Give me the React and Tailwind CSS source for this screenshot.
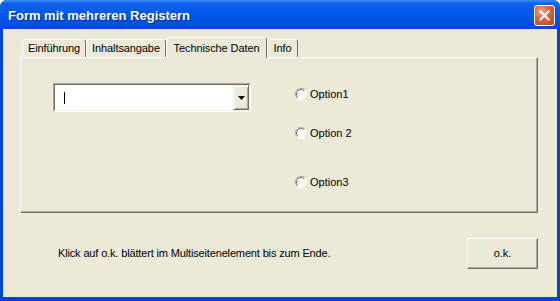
import React from 'react';

const TABS = [
  { label: 'Einführung', cls: 'w-[64px]' },
  { label: 'Inhaltsangabe', cls: 'w-[80px]' },
  { label: 'Technische Daten', cls: 'w-[101px]', active: true },
  { label: 'Info', cls: 'w-[31px]' },
];

const Radio = ({ label }) => (
  <div className="flex items-center h-[16px]">
    <svg width="12" height="12" viewBox="0 0 12 12" className="shrink-0">
      <circle cx="6" cy="6" r="5.5" fill="#fff" />
      <path d="M2.1 9.9 A5.5 5.5 0 0 1 9.9 2.1" stroke="#ACA899" strokeWidth="1" fill="none" />
      <path d="M9.9 2.1 A5.5 5.5 0 0 1 2.1 9.9" stroke="#ffffff" strokeWidth="1" fill="none" />
      <path d="M2.8 9.2 A4.5 4.5 0 0 1 9.2 2.8" stroke="#716F64" strokeWidth="1" fill="none" />
      <path d="M9.2 2.8 A4.5 4.5 0 0 1 2.8 9.2" stroke="#F1EFE2" strokeWidth="1" fill="none" />
    </svg>
    <span className="ml-[3px] text-[11px] text-black leading-none">{label}</span>
  </div>
);

const CloseButton = () => (
  <div className="w-[21px] h-[21px] rounded-[3px] border border-white bg-[radial-gradient(circle_at_35%_30%,#F0A08A_0%,#E0613D_45%,#C2401C_100%)] flex items-center justify-center">
    <svg width="13" height="13" viewBox="0 0 13 13">
      <path d="M2.5 2.5 L10.5 10.5 M10.5 2.5 L2.5 10.5" stroke="#fff" strokeWidth="2.2" strokeLinecap="square" />
    </svg>
  </div>
);

export default function App() {
  return (
    <div className="w-[560px] h-[301px] flex flex-col bg-[#0842D2] rounded-t-[7px] overflow-hidden font-['Liberation_Sans',Arial,sans-serif]">
      {/* title bar */}
      <div className="h-[29px] shrink-0 flex items-center justify-between pl-[8px] pr-[5px] pt-[2px] bg-[linear-gradient(to_bottom,#3C8CF9_0%,#0F63EC_12%,#0058E8_45%,#0052E0_80%,#0046D3_100%)]">
        <span className="text-white font-bold text-[13px] [text-shadow:1px_1px_#0B2D8E]">Form mit mehreren Registern</span>
        <CloseButton />
      </div>

      {/* body */}
      <div className="flex-1 ml-[3px] mr-[3px] mb-[4px] bg-[#ECE9D8] flex flex-col pl-[17px] pr-[19px] pt-[8px]">
        {/* tab row */}
        <div className="h-[20px] flex items-end pl-[2px] tracking-[-0.1px]">
          {TABS.map((t) =>
            t.active ? (
              <div
                key={t.label}
                className={`${t.cls} relative z-10 h-[21px] -mb-[1px] bg-[#ECE9D8] border-l border-t border-r border-l-white border-t-white border-r-[#716F64] rounded-t-[3px] flex items-start justify-center pt-[2px] text-[11px] text-black`}
              >
                {t.label}
              </div>
            ) : (
              <div
                key={t.label}
                className={`${t.cls} h-[18px] bg-[#ECE9D8] border-l border-t border-r border-l-white border-t-white border-r-[#716F64] rounded-t-[3px] flex items-center justify-center text-[11px] text-black`}
              >
                {t.label}
              </div>
            )
          )}
        </div>

        {/* page */}
        <div className="h-[156px] shrink-0 border border-t-white border-l-white border-r-[#716F64] border-b-[#716F64] shadow-[inset_-1px_-1px_#ACA899] flex">
          <div className="pl-[32px] pt-[25px]">
            <div className="w-[198px] h-[29px] border border-t-[#ACA899] border-l-[#ACA899] border-r-white border-b-white">
              <div className="w-full h-full border border-t-[#716F64] border-l-[#716F64] border-r-[#F1EFE2] border-b-[#F1EFE2] bg-white flex items-center justify-between">
                <div className="ml-[9px] w-px h-[12px] bg-black" />
                <div className="w-[16px] h-full border border-t-[#F1EFE2] border-l-[#F1EFE2] border-r-[#716F64] border-b-[#716F64] bg-[#ECE9D8] shadow-[inset_1px_1px_#fff,inset_-1px_-1px_#ACA899] flex items-center justify-center">
                  <svg width="7" height="4" viewBox="0 0 7 4">
                    <path d="M0 0 H7 L3.5 4 Z" fill="#000" />
                  </svg>
                </div>
              </div>
            </div>
          </div>
          <div className="ml-[44px] pt-[28px] flex flex-col">
            <Radio label="Option1" />
            <div className="mt-[23px]">
              <Radio label="Option 2" />
            </div>
            <div className="mt-[33px]">
              <Radio label="Option3" />
            </div>
          </div>
        </div>

        {/* bottom */}
        <div className="flex items-start justify-between pt-[25px]">
          <span className="ml-[38px] mt-[7px] text-[11px] tracking-[-0.15px] text-black">Klick auf o.k. blättert im Multiseitenelement bis zum Ende.</span>
          <div className="w-[71px] h-[31px] border border-t-white border-l-white border-r-[#716F64] border-b-[#716F64] shadow-[inset_-1px_-1px_#ACA899] bg-[#ECE9D8] flex items-center justify-center text-[11px] text-black">
            o.k.
          </div>
        </div>
      </div>
    </div>
  );
}
